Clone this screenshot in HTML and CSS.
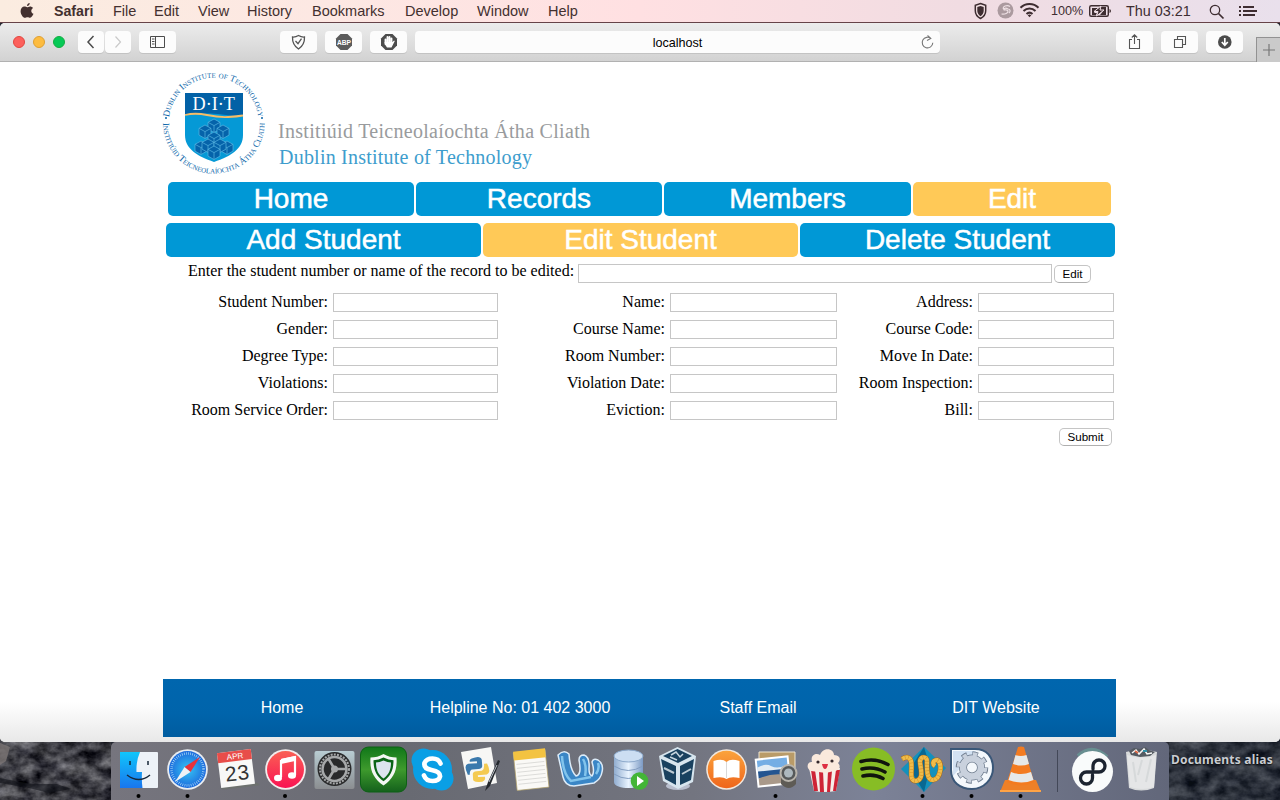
FILE: index.html
```html
<!DOCTYPE html>
<html lang="en">
<head>
<meta charset="utf-8">
<title>localhost</title>
<link rel="stylesheet" href="styles.css">
</head>
<body>
<div class="menubar">
  <svg class="apple" width="14" height="18" viewBox="0 0 14 18"><path fill="#43302f" d="M9.700 1c.1 1.600-1.200 3.100-2.700 3.100C6.800 2.600 8.200 1.200 9.700 1zM7.200 5.200c.7 0 1.600-.8 2.900-.8 1 0 2.200.5 2.900 1.500-2.500 1.500-2.100 4.900.5 5.900-.6 1.600-2 4-3.400 4-1 0-1.400-.6-2.600-.6s-1.700.6-2.600.6C3.200 15.800.6 12.500.6 9.200c0-3 1.900-4.700 3.800-4.700 1.200 0 2 .7 2.800.7z"/></svg>
  <nav class="menus"><b>Safari</b><span>File</span><span>Edit</span><span>View</span><span>History</span><span>Bookmarks</span><span>Develop</span><span>Window</span><span>Help</span></nav>
  <div class="status">
    <svg width="80" height="22" viewBox="970 0 80 22">
      <path d="M980.500 3.500l5.200 1.700v5.500c0 3.500-2.300 6.200-5.200 7.800-2.900-1.600-5.200-4.300-5.200-7.800V5.200z" fill="#f3e1e4" stroke="#3e2d31" stroke-width="1.500"/>
      <path d="M980.500 6l3.200 1v4c0 2.300-1.500 4-3.200 5.200-1.700-1.200-3.200-2.900-3.200-5.200V7z" fill="#3e2d31"/>
      <circle cx="1005.500" cy="10.500" r="8" fill="#ab9a9f"/>
      <path d="M1010 6.500c-3-2-8 0-6.500 2.500 1 1.500 4 0 4.500 2 .4 2-3 3.500-6.500 3M1008 9c-3-2-5 0-3.500 1.500M1009 13c2-2 1-4-1-4" fill="none" stroke="#eee0e4" stroke-width="1.200"/>
      <g fill="none" stroke="#3e2d31" stroke-width="2"><path d="M1020.500 7.800c5-5 13-5 18 0M1023.500 11c3.500-3.500 8.500-3.500 12 0M1026.500 14c2-1.900 4-1.900 6 0"/></g>
      <path d="M1027.700 15.200c1.200-1 2.400-1 3.600 0l-1.800 2z" fill="#3e2d31"/>
    </svg>
    <span class="pct">100%</span>
    <svg class="battery" width="24" height="22" viewBox="0 0 24 22"><rect x="1.700" y="5.700" width="18.600" height="10.600" rx="1.500" fill="none" stroke="#3e2d31" stroke-width="1.400"/><path d="M4 8h6l-4 5h3l-1 2H4zM13 7h5v8h-6l4-5h-4z" fill="#3e2d31"/><path d="M13 6l-7 5.500h4L8.500 16l7.500-6h-4z" fill="#3e2d31" stroke="#efdde4"/><path d="M21.500 9v4q1.500-.4 1.500-2t-1.500-2" fill="#3e2d31"/></svg>
    <span class="clock">Thu 03:21</span>
    <svg class="tail" width="50" height="22" viewBox="1208 0 50 22"><circle cx="1215" cy="10" r="4.700" fill="none" stroke="#3e2d31" stroke-width="1.300"/><path d="M1218.500 13.500l5 5" stroke="#3e2d31" stroke-width="1.700"/><path d="M1243 7h11M1243 11h14M1243 15h12" stroke="#3e2d31" stroke-width="2"/><path d="M1239 7h2M1239 11h2M1239 15h2" stroke="#3e2d31" stroke-width="2"/></svg>
  </div>
</div>

<div class="desktop">
<div class="window">
  <div class="toolbar">
    <div class="lights"><i class="red"></i><i class="amber"></i><i class="green"></i></div>
    <div class="btn half"><svg width="26" height="22"><path d="M15.500 5l-5.500 6 5.500 6" fill="none" stroke="#4c4c4c" stroke-width="1.500"/></svg></div>
    <div class="btn half fwd"><svg width="26" height="22"><path d="M10.500 5.500l5 5.500-5 5.500" fill="none" stroke="#c9c9c9" stroke-width="1.200"/></svg></div>
    <div class="btn side"><svg width="37" height="22"><path d="M11.500 5.500h14v11h-14zM16.500 5.500v11" fill="none" stroke="#4c4c4c"/><path d="M13 8h2.500M13 10.500h2.500M13 13h2.500" stroke="#4c4c4c"/></svg></div>
    <div class="btn ext1"><svg width="37" height="22"><path d="M18.500 4.500q3 1.800 6 1.500c.2 5-1.500 9-6 12-4.500-3-6.200-7-6-12q3 .3 6-1.500z" fill="none" stroke="#555" stroke-width="1.300"/><path d="M15.500 10l2.500 2.700 3.500-5" fill="none" stroke="#555" stroke-width="1.300"/></svg></div>
    <div class="btn ext"><svg width="37" height="22"><path d="M15.500 3h7l4.500 4.500v7L22.500 19h-7L11 14.500v-7z" fill="#5c5c5c"/><text x="19" y="14" font-size="8" font-weight="700" font-family="Liberation Sans, sans-serif" text-anchor="middle" fill="#fff" textLength="14" lengthAdjust="spacingAndGlyphs">ABP</text></svg></div>
    <div class="btn ext"><svg width="37" height="22"><path d="M15.500 3h7l4.500 4.500v7L22.500 19h-7L11 14.500v-7z" fill="#4d4d4d"/><path d="M15.500 13V8.500M17.500 12V6M19.500 12V6M21.500 13V7.500" stroke="#fff" stroke-width="1.900" stroke-linecap="round"/><path d="M14.500 11h8l1.500-1.500.8.500-3.300 6.500h-4.500q-2-2-2.500-5.500z" fill="#fff"/></svg></div>
    <div class="address"><span>localhost</span><svg class="reload" width="16" height="16" viewBox="0 0 16 16"><path d="M12 4.600a5.300 5.300 0 1 0 1.800 4.200M8.500 1.500l3.300 2.900-3.800 2" fill="none" stroke="#777" stroke-width="1.100"/></svg></div>
    <div class="btn share"><svg width="37" height="22"><path d="M16 8.500h-2.500v9h10v-9H21M18.500 13V4M15.800 6.500l2.700-2.800 2.700 2.800" fill="none" stroke="#555" stroke-width="1.100"/></svg></div>
    <div class="btn ext"><svg width="37" height="22"><path d="M13.500 8.500h8v8h-8zM16.500 8V5.500h8v8H22" fill="none" stroke="#555" stroke-width="1.100"/></svg></div>
    <div class="btn ext"><svg width="37" height="22"><circle cx="18.800" cy="11" r="6.800" fill="#4c4c4c"/><path d="M18.800 7v6M15.800 11l3 3.300 3-3.300" fill="none" stroke="#fff" stroke-width="1.700"/></svg></div>
    <div class="newtab"><svg width="23" height="24"><path d="M6 12h12M12 6v12" stroke="#777" stroke-width="1.200"/></svg></div>
  </div>

  <main class="page">
    <div class="site">
      <header class="logo">
        <svg width="440" height="118" viewBox="160 62 440 118" font-family="Liberation Serif, serif">
          <defs>
            <path id="arcTop" d="M168.900 118.500a45 45 0 0 1 89.600 0"/>
            <path id="arcBottom" d="M163 120.500a50.800 50.800 0 1 0 101.500 0"/>
            <g id="cube"><path d="M0-7l6 3.300v6.800L0 6.500l-6-3.400v-6.800z" fill="#0563aa" stroke="#57b4e1" stroke-width=".7"/><path d="M-6-3.700L0-.4l6-3.300M0-.4v7" stroke="#57b4e1" stroke-width=".7" fill="none"/></g>
          </defs>
          <g class="ring" fill="#0b66aa" text-anchor="middle">
            <text font-size="9.400"><textPath href="#arcTop" startOffset="50%">Dublin Institute of Technology</textPath></text>
            <text font-size="9.300"><textPath href="#arcBottom" startOffset="50%">Institiúid Teicneolaíochta Átha Cliath</textPath></text>
          </g>
          <circle cx="166" cy="118" r="1" fill="#0b66aa"/><circle cx="262" cy="118" r="1" fill="#0b66aa"/>
          <path d="M185 93h58v42c0 14-12 21-29 27-17-6-29-13-29-27z" fill="#0599d6"/>
          <path d="M185 93h58v22q-7 2-17 0t-20-1.500-21 .5z" fill="#0261a6"/>
          <path d="M185 115q10-2.500 22 0t21 2 15-1.500" fill="none" stroke="#f6bd67" stroke-width="1.800"/>
          <text x="192.500" y="110" font-size="18" fill="#fff" textLength="42.500" lengthAdjust="spacingAndGlyphs">D·I·T</text>
          <use href="#cube" x="214" y="126"/><use href="#cube" x="205" y="132"/><use href="#cube" x="223" y="132"/><use href="#cube" x="214" y="139"/><use href="#cube" x="201" y="148"/><use href="#cube" x="227" y="148"/><use href="#cube" x="208" y="146"/><use href="#cube" x="220" y="146"/><use href="#cube" x="214" y="153"/>
          <text x="278" y="137.500" font-size="20" fill="#999b9d" textLength="312">Institiúid Teicneolaíochta Átha Cliath</text>
          <text x="279" y="163.500" font-size="20" fill="#3d9dcd" textLength="253">Dublin Institute of Technology</text>
        </svg>
      </header>
      <nav class="tabs main"><a>Home</a><a>Records</a><a>Members</a><a class="on">Edit</a></nav>
      <nav class="tabs sub"><a>Add Student</a><a class="on">Edit Student</a><a>Delete Student</a></nav>
      <div class="search"><label>Enter the student number or name of the record to be edited:</label><input type="text"><button>Edit</button></div>
      <div class="fields">
        <label>Student Number:</label><input><label>Name:</label><input><label>Address:</label><input>
        <label>Gender:</label><input><label>Course Name:</label><input><label>Course Code:</label><input>
        <label>Degree Type:</label><input><label>Room Number:</label><input><label>Move In Date:</label><input>
        <label>Violations:</label><input><label>Violation Date:</label><input><label>Room Inspection:</label><input>
        <label>Room Service Order:</label><input><label>Eviction:</label><input><label>Bill:</label><input>
      </div>
      <div class="submit"><button>Submit</button></div>
      <footer><span>Home</span><span>Helpline No: 01 402 3000</span><span>Staff Email</span><span>DIT Website</span></footer>
    </div>
  </main>
</div>

<div class="bottom">
  <div class="rock"><svg width="119" height="64">
    <defs><filter id="stone" x="0" y="0" width="100%" height="100%" color-interpolation-filters="sRGB"><feTurbulence type="fractalNoise" baseFrequency=".06 .08" numOctaves="4" seed="8"/><feColorMatrix values=".75 .15 0 0 -.2  .75 .15 0 0 -.2  .75 .12 0 0 -.16  0 0 0 0 1"/></filter></defs>
    <rect width="119" height="64" filter="url(#stone)"/><path d="M0 6l10 4-4 14-6 4z" fill="#817b79" opacity=".7"/><path d="M0 41l20 4 12 2 25 0 14 5-22 4-20-5-29-5z" fill="#12141b" opacity=".6"/></svg></div>
  <div class="dock">
    <svg width="49" height="58"><defs><linearGradient id="fb" x2="0" y2="1"><stop stop-color="#10c6fb"/><stop offset="1" stop-color="#1976ee"/></linearGradient></defs><rect x="6" y="10" width="38" height="36" rx="1" fill="#edf2f8"/><path d="M6 10h20q-4 9-3.500 20H28q-.5 9 .5 16H6z" fill="url(#fb)"/><path d="M16 19v4M34 19v4" stroke="#18283a" stroke-width="1.500"/><path d="M13 33q12 9 23 0" fill="none" stroke="#18283a" stroke-width="1.500"/><circle cx="24.500" cy="54" r="2"/></svg>
    <svg width="49" height="58"><defs><radialGradient id="sf"><stop stop-color="#36c5f5"/><stop offset="1" stop-color="#1d6bdc"/></radialGradient></defs><circle cx="24.500" cy="27.500" r="20.300" fill="#e9edf1"/><circle cx="24.500" cy="27.500" r="18.500" fill="url(#sf)"/><circle cx="24.500" cy="27.500" r="16" fill="none" stroke="#bfe6fb" stroke-width="2.500" stroke-dasharray=".6 1.500"/><path d="M37 15L27.500 30l-6-5z" fill="#e9323a"/><path d="M12 40l9.500-15 6 5z" fill="#eef2f5"/><circle cx="24.500" cy="54" r="2"/></svg>
    <svg width="49" height="58"><g transform="rotate(-7 24 27)"><path d="M6 43h37l3 3H8z" fill="#6d716f"/><rect x="7" y="9" width="34" height="35" fill="#f8f8f7"/><rect x="7" y="9" width="34" height="10" fill="#e84d49"/><text x="24.500" y="17" text-anchor="middle" font-size="8" fill="#fff" font-family="Liberation Sans">APR</text><text x="24.500" y="38.500" text-anchor="middle" font-size="21" fill="#333" font-family="Liberation Sans, sans-serif" textLength="24">23</text></g></svg>
    <svg width="49" height="58"><defs><linearGradient id="mu" x2="0" y2="1"><stop stop-color="#fa6054"/><stop offset="1" stop-color="#f91353"/></linearGradient></defs><circle cx="24.500" cy="27.500" r="20.300" fill="#f3eeee"/><circle cx="24.500" cy="27.500" r="18.500" fill="url(#mu)"/><path d="M20 18l14-3v18M20 35V18" fill="none" stroke="#fff" stroke-width="2.200"/><path d="M20 17l14-3v5l-14 3z" fill="#fff"/><ellipse cx="17" cy="36" rx="4" ry="3.300" fill="#fff"/><ellipse cx="31" cy="33.500" rx="4" ry="3.300" fill="#fff"/><circle cx="24" cy="54" r="2"/></svg>
    <svg width="49" height="58"><defs><linearGradient id="sy" x2="0" y2="1"><stop stop-color="#b8ccd2"/><stop offset="1" stop-color="#8b8e91"/></linearGradient></defs><rect x="4.500" y="9" width="40" height="38" rx="2" fill="url(#sy)"/><circle cx="24.500" cy="27" r="17" fill="#292a2b"/><circle cx="24.500" cy="27" r="14.500" fill="none" stroke="#a6a8a9" stroke-width="2" stroke-dasharray="2 1.200"/><circle cx="24.500" cy="27" r="12" fill="none" stroke="#a6a8a9" stroke-width="2.500"/><circle cx="24.500" cy="27" r="3.500" fill="#a6a8a9"/><path d="M18 16l6.500 11H37M24.500 27L18 38" fill="none" stroke="#a6a8a9" stroke-width="2.600"/></svg>
    <svg width="49" height="58"><defs><linearGradient id="av" x2="0" y2="1"><stop stop-color="#107719"/><stop offset=".5" stop-color="#3e9a2d"/><stop offset="1" stop-color="#14611c"/></linearGradient></defs><rect x="1.500" y="5" width="46" height="45" rx="8" fill="url(#av)" stroke="#0d6114"/><path d="M24.500 12q6 3.500 13 3.500c1 13-3 21-13 28-10-7-14-15-13-28q7 0 13-3.500z" fill="#f4f7f4"/><path d="M24.500 15.500q5 2.500 10 2.800c0 10-3 16-10 21-7-5-10-11-10-21q5-.3 10-2.800z" fill="#0b6517"/><path d="M24.500 18.500q4 2 7.500 2c0 7-2 12-7.500 16-5.500-4-7.500-9-7.500-16q3.500 0 7.500-2z" fill="#dce4ef"/></svg>
    <svg width="49" height="58"><g fill="#0a9fe5"><circle cx="24.500" cy="27.500" r="19.500"/><circle cx="15.500" cy="18.500" r="12"/><circle cx="33.500" cy="36.500" r="12"/></g><path d="M32.500 21.500q-2-5-8-5t-8 4.500q-1 5.500 7 7 9 1.800 8.500 6.500-1 4.500-7.500 4.500t-8.500-5.500" fill="none" stroke="#fff" stroke-width="4.700" stroke-linecap="round"/></svg>
    <svg width="49" height="58"><path d="M4 10l30-5 6 36-29 6z" fill="#f7f7f5"/><g transform="translate(-1.500 1) rotate(-4 24 27)"><path d="M17 15q9-3 10 2v6q0 3-4 3h-6q-3 0-3 5h-2q-4-10 1-11h9v-2h-7q-1-2 2-3z" fill="#3a79ac"/><path d="M29 21h3q4 9-1 11h-9v2h7q1 5-6 5-7 0-6-5v-3q0-3 4-3h5q3-1 3-7z" fill="#f4ca50"/></g><path d="M43 19L33 44l-5 5 3-9 10-22z" fill="#24282d"/><path d="M40 23l-8 17" stroke="#b6bcc3"/></svg>
    <svg width="49" height="58"><g transform="rotate(-6 24 27)"><path d="M9 9h32v38H9z" fill="#faf9f6" stroke="#b4a36c" stroke-width=".7"/><path d="M9 8h32v9H9z" fill="#f3c341"/><path d="M11 21h28M11 25h28M11 29h28M11 33h28M11 37h28M11 41h28" stroke="#d0d0ce" stroke-width=".7"/></g></svg>
    <svg width="49" height="58"><path d="M3 13q6-6 11-1 1 16 7 22 6-1 3-16 0-5 5-5 6 2 5 14 0 6 3 7 3-4 0-14 1-4 6-2 6 4 4 12-1 7-8 11L19 44Q10 44 8 35z" fill="#3a86c6" stroke="#dcebf8" stroke-width="1.500" stroke-linejoin="round"/><path d="M7 14q1 18 9 25l20-4M28 17q4 7 2 17M43 21q2 5-2 11" fill="none" stroke="#82c4ec" stroke-width="2.500"/><circle cx="24.500" cy="54" r="2"/></svg>
    <svg width="49" height="58"><defs><linearGradient id="db"><stop stop-color="#91add0"/><stop offset=".5" stop-color="#e9f4ff"/><stop offset="1" stop-color="#7c9ac4"/></linearGradient></defs><path d="M10 15v25c0 8 29 8 29 0V15z" fill="url(#db)"/><ellipse cx="24.500" cy="14" rx="14.500" ry="6" fill="#ccdef2" stroke="#8ba8ca"/><path d="M10 24q14 9 29 0M10 32q14 9 29 0" fill="none" stroke="#829dc0"/><circle cx="35.500" cy="39" r="8.800" fill="#43b537"/><path d="M33 34l7 5-7 5z" fill="#fff"/></svg>
    <svg width="49" height="58"><ellipse cx="25" cy="44" rx="12" ry="4" fill="#b9bfce"/><path d="M24.500 5L43 14l-3 26-15 7-15-8-4-25z" fill="#d7e5ee"/><path d="M24.500 7L39 14l-14 7-15-7z" fill="#19415f"/><path d="M8 17l15 7v19l-11-6zM41 17l-14 7v19l11-5z" fill="#19415f"/><path d="M18 13l5-3 4 5 3-3M17 15l7 3" fill="none" stroke="#c6d5df" stroke-width="1.500"/><path d="M11 26l10 5M29 32l9-5" stroke="#bdcad3" stroke-width="2"/></svg>
    <svg width="49" height="58"><defs><linearGradient id="bk" x2="0" y2="1"><stop stop-color="#fba33c"/><stop offset="1" stop-color="#ef651b"/></linearGradient></defs><circle cx="24.500" cy="27.500" r="20.300" fill="#f2e8de"/><circle cx="24.500" cy="27.500" r="18.800" fill="url(#bk)"/><path d="M24.500 20q-4-4-13-1v17q9-2 13 1 4-3 13-1V19q-9-3-13 1z" fill="#fff"/><path d="M24.500 20v16" stroke="#d9d9d9"/></svg>
    <svg width="49" height="58"><path d="M8 10h36v24H8z" fill="#b99b68" stroke="#eee4cd"/><g transform="rotate(-6 22 29)"><path d="M5 15h34v29H5z" fill="#fff"/><path d="M7 17h30v11H7z" fill="#75aee4"/><path d="M7 24q8-4 14 0t16 0v5H7z" fill="#e4edf4"/><path d="M7 28h30v7H7z" fill="#245591"/><path d="M7 35q15-5 30 0v7H7z" fill="#a9998a"/></g><path d="M30 33v9q8 8 15 0v-9z" fill="#5e5b55"/><circle cx="37.500" cy="31" r="8" fill="#56595a" stroke="#b8b4ac" stroke-width="2"/><circle cx="37.500" cy="31" r="4.500" fill="#adb8be"/><circle cx="24.500" cy="54" r="2"/></svg>
    <svg width="49" height="58"><path d="M9 26h31l-4 23q-12 2-22 0z" fill="#f6eee9"/><path d="M11 28h4l3 21h-4zM19 29h4l1 21h-4zM28 29h4l-2 21h-3zM36 28h4l-4 21h-3z" fill="#ce2436"/><path d="M11 29c-6-3-3-10 1-9-2-8 5-9 8-7 4-9 14-6 14 0 8 1 6 6 4 8 4 4 0 8-4 8l-8 2z" fill="#fae9dc"/><circle cx="18" cy="20" r="1.600" fill="#33272a"/><circle cx="32" cy="19" r="1.600" fill="#33272a"/><path d="M22 22h6q-1 5-3 5t-3-5z" fill="#dd2f42"/></svg>
    <svg width="49" height="58"><circle cx="24.500" cy="27" r="21.500" fill="#87bd25"/><path d="M12 19.500q14-4 27 3M13 27q12-3 23 3M14 34q11-2.500 20 2.500" fill="none" stroke="#10150d" stroke-linecap="round" stroke-width="3.600"/></svg>
    <svg width="49" height="58"><path d="M26 5l22 21-22 24L3 27z" fill="#1391bd"/><path d="M26 5l6 20-6 25L12 27z" fill="#096892"/><g fill="none"><path id="rope" d="M4 17q7-4 9 2c2 8-3 20 5 20 9-2 4-14 4-20 1-5 7-5 7 0 0 6-1 19 6 19 8-1 10-18 4-20-4 0-5 4-2 6" stroke="#a5691b" stroke-width="5.200"/><path d="M4 17q7-4 9 2c2 8-3 20 5 20 9-2 4-14 4-20 1-5 7-5 7 0 0 6-1 19 6 19 8-1 10-18 4-20-4 0-5 4-2 6" stroke="#f0bc48" stroke-width="4.200"/><path d="M4 17q7-4 9 2c2 8-3 20 5 20 9-2 4-14 4-20 1-5 7-5 7 0 0 6-1 19 6 19 8-1 10-18 4-20" stroke="#d3942d" stroke-width="4" stroke-dasharray=".6 2.600"/></g><circle cx="24.500" cy="54" r="2"/></svg>
    <svg width="49" height="58"><path d="M4 7h24c12 0 18 8 18 19S37 47 25 47 4 40 4 28z" fill="#f4f8fc" stroke="#3a5778" stroke-width="2"/><path d="M6 9h23L6 34z" fill="#d2e1f2"/><g transform="translate(25 25.500)"><circle r="13.500" fill="none" stroke="#6d7b8d" stroke-width="5.500" stroke-dasharray="5.300 5.300"/><circle r="9" fill="none" stroke="#6d7b8d" stroke-width="8"/><circle r="9" fill="none" stroke="#c9d1dd" stroke-width="6.500"/><circle r="13.300" fill="none" stroke="#c9d1dd" stroke-width="4" stroke-dasharray="4.200 6.250" stroke-dashoffset="-.5"/></g><circle cx="24.500" cy="54" r="2"/></svg>
    <svg width="49" height="58"><path d="M9 38h31l5 12H4z" fill="#ee8027"/><path d="M4 48h41v2H4z" fill="#ffa345"/><path d="M22 5q3-1 6 0l10 35q-13 7-27 0z" fill="#f37b20"/><path d="M19.500 13q5 2 11 0l2.500 9q-8 3-16 0zM15 30q10 4 20 0l2.500 8q-12 5-25 0z" fill="#e6e8e8"/><circle cx="24.500" cy="54" r="2"/></svg>
    <i class="sep"></i>
    <svg class="loop" width="49" height="58"><path d="M10 14q14-13 29 1" fill="none" stroke="#688f91" stroke-width="4"/><circle cx="24.500" cy="29.500" r="20.500" fill="#f9fbfb"/><path d="M24.500 33v3a6 6 0 1 1-6-6h12.500a6 6 0 1 0-6-6v3" fill="none" stroke="#1c2430" stroke-width="3.300" stroke-linecap="round"/></svg>
    <svg width="49" height="58"><path d="M9 10q15-5 31 0l-3 36q-13 5-25 0z" fill="#d8dadb"/><path d="M10 13q14 5 29 0l-2 32q-12 4-24 0z" fill="#e5e6e7"/><path d="M12 9l5-3 6 1 5-2 4 3 6 2-5 4-10 1-9-2z" fill="#555b62"/><path d="M15 11l4-3 3 4 5-5 3 5 5-1" fill="none" stroke="#f8f8f7" stroke-width="1.500"/><path d="M18 9l3 2" stroke="#dd6846" stroke-width="2"/><path d="M26 9h4" stroke="#3292a9" stroke-width="2"/><path d="M16 20l3 20M25 18l-4 15M34 17l-5 23" stroke="#d6d9da" stroke-width="2"/></svg>
  </div>
  <div class="rock right"><svg width="119" height="64"><rect width="119" height="64" filter="url(#stone)"/><rect width="119" height="64" fill="#15202f" opacity=".4"/></svg><span>Documents alias</span></div>
</div>
</div>
</body>
</html>
```
FILE: styles.css
```css
* { box-sizing: border-box; }
body { margin: 0; width: 1280px; height: 800px; overflow: hidden; display: flex; flex-direction: column; background: #252832; font-family: "Liberation Sans", Arial, sans-serif; }
svg { display: block; flex: none; }

.menubar { height: 23px; flex: none; display: flex; background: linear-gradient(90deg, #fbece0 0, #fde8e3 25%, #ffe0e2 50%, #f1dce2 75%, #e9e0ec 100%); border-bottom: 1px solid #664348; color: #43302f; font-size: 14.5px; line-height: 22px; }
.apple { margin: 2px 0 0 20px; }
.menus { display: grid; grid-template-columns: 59px 41px 44px 49px 65px 93px 72px 71px 40px; margin-left: 20px; white-space: nowrap; }
.menus b { font-size: 14.2px; }
.status { display: flex; margin-left: auto; color: #3e2d31; }
.pct { font-size: 12.6px; width: 37px; margin-left: 1px; }
.clock { margin-left: 14px; width: 82px; font-size: 14.4px; white-space: nowrap; }
.tail { margin-right: 22px; }

.desktop { flex: 1; display: flex; flex-direction: column; }
.window { height: 719px; flex: none; border-radius: 5px; overflow: hidden; background: #fff; z-index: 1; }
.toolbar { height: 39px; display: flex; align-items: flex-start; padding-top: 8px; background: linear-gradient(#ececec, #d2d2d2); border-bottom: 1px solid #b1b1b1; }
.lights { display: flex; gap: 8px; padding: 5px 0 0 13px; width: 78px; }
.lights i { width: 12px; height: 12px; border-radius: 50%; border: 1px solid #e2463f; background: #fc605c; }
.lights .amber { background: #fdbc40; border-color: #dfa032; }
.lights .green { background: #06c956; border-color: #14ad42; }
.btn { width: 37px; height: 22px; border-radius: 4px; background: #fcfcfc; box-shadow: 0 1px 0 #c3c3c3; }
.half { width: 26px; }
.fwd { margin-left: 1px; }
.side { margin-left: 8px; }
.ext1 { margin-left: 104px; }
.ext { margin-left: 8px; }
.address { width: 525px; height: 22px; margin-left: 8px; border-radius: 4px; background: #fcfcfc; box-shadow: 0 1px 0 #c3c3c3; font-size: 12.6px; line-height: 24px; text-align: center; display: grid; grid-template-columns: 1fr 20px; padding-left: 20px; }
.reload { margin: 3px 0 0 -1px; }
.share { margin-left: 176px; }
.newtab { margin: 6px 0 0 13px; width: 24px; height: 25px; border: solid #929292; border-width: 1px 0 0 1px; background: #cacaca; }

.page { height: 680px; background: linear-gradient(#fff 0, #fff 640px, #e8e8e8 680px); }
.site { width: 953px; height: 675px; margin-left: 163px; display: flex; flex-direction: column; }
.logo { height: 118px; margin-left: -3px; }
.ring { font-variant: small-caps; }
.tabs { display: grid; column-gap: 2px; height: 34px; margin: 2px 0 0 5px; color: #fff; font-size: 28px; line-height: 33px; text-align: center; -webkit-text-stroke: .5px #fff; }
.tabs a { background: #0098d6; border-radius: 5px; }
.tabs .on { background: #ffc957; }
.main { grid-template-columns: 246px 246px 247px 198px; }
.sub { grid-template-columns: repeat(3, 315px); margin: 7px 0 0 3px; }
.search, .fields { font: 16px/18px "Liberation Serif", "Times New Roman", serif; color: #000; }
.search { display: flex; padding: 7px 0 0 25px; white-space: nowrap; }
.search label { width: 390px; line-height: 13px; }
.search input { width: 474px; }
input { border: 1px solid #c6c6c6; background: #fff; height: 19px; min-width: 0; padding: 0; }
button { font: 11.6px/15px "Liberation Sans", Arial, sans-serif; color: #000; background: #fff; border: 1px solid #c5c5c5; border-bottom-color: #afafaf; border-radius: 5px; height: 18px; padding: 0 0 2px; text-align: center; }
.search button { width: 37px; margin: 1px 0 0 2px; }
.fields { display: grid; grid-template-columns: 165px 165px 162px 167px 131px 136px; column-gap: 5px; row-gap: 8px; grid-auto-rows: 19px; margin-top: 10px; text-align: right; }
.submit { display: flex; justify-content: flex-end; margin: 8px 4px 0 0; }
.submit button { width: 53px; }
footer { margin-top: auto; height: 58px; background: linear-gradient(#0066ae 0, #0064ab 60%, #005c9f 100%); color: #fff; display: grid; grid-template-columns: repeat(4, 238px); text-align: center; font-size: 16px; line-height: 57px; }

.bottom { flex: 1; display: flex; }
.rock { width: 111px; margin-top: -5px; height: 63px; overflow: hidden; }
.dock { width: 1058px; display: flex; padding-left: 2.5px; background: linear-gradient(90deg, #76757e, #686a72 28%, #737580 55%, #7c8297 72%, #62677a 100%); border-radius: 5px 5px 0 0; }
.sep { width: 1px; height: 42px; background: #434858; margin: 8px 0 0 12px; }
.loop { margin-left: 10px; }
.right { position: relative; }
.right span { position: absolute; left: 2px; top: 16px; color: #c9ccd1; font: bold 12px/14px "Noto Sans", sans-serif; letter-spacing: .2px; white-space: nowrap; text-shadow: 0 1px 2px #000; }
```
